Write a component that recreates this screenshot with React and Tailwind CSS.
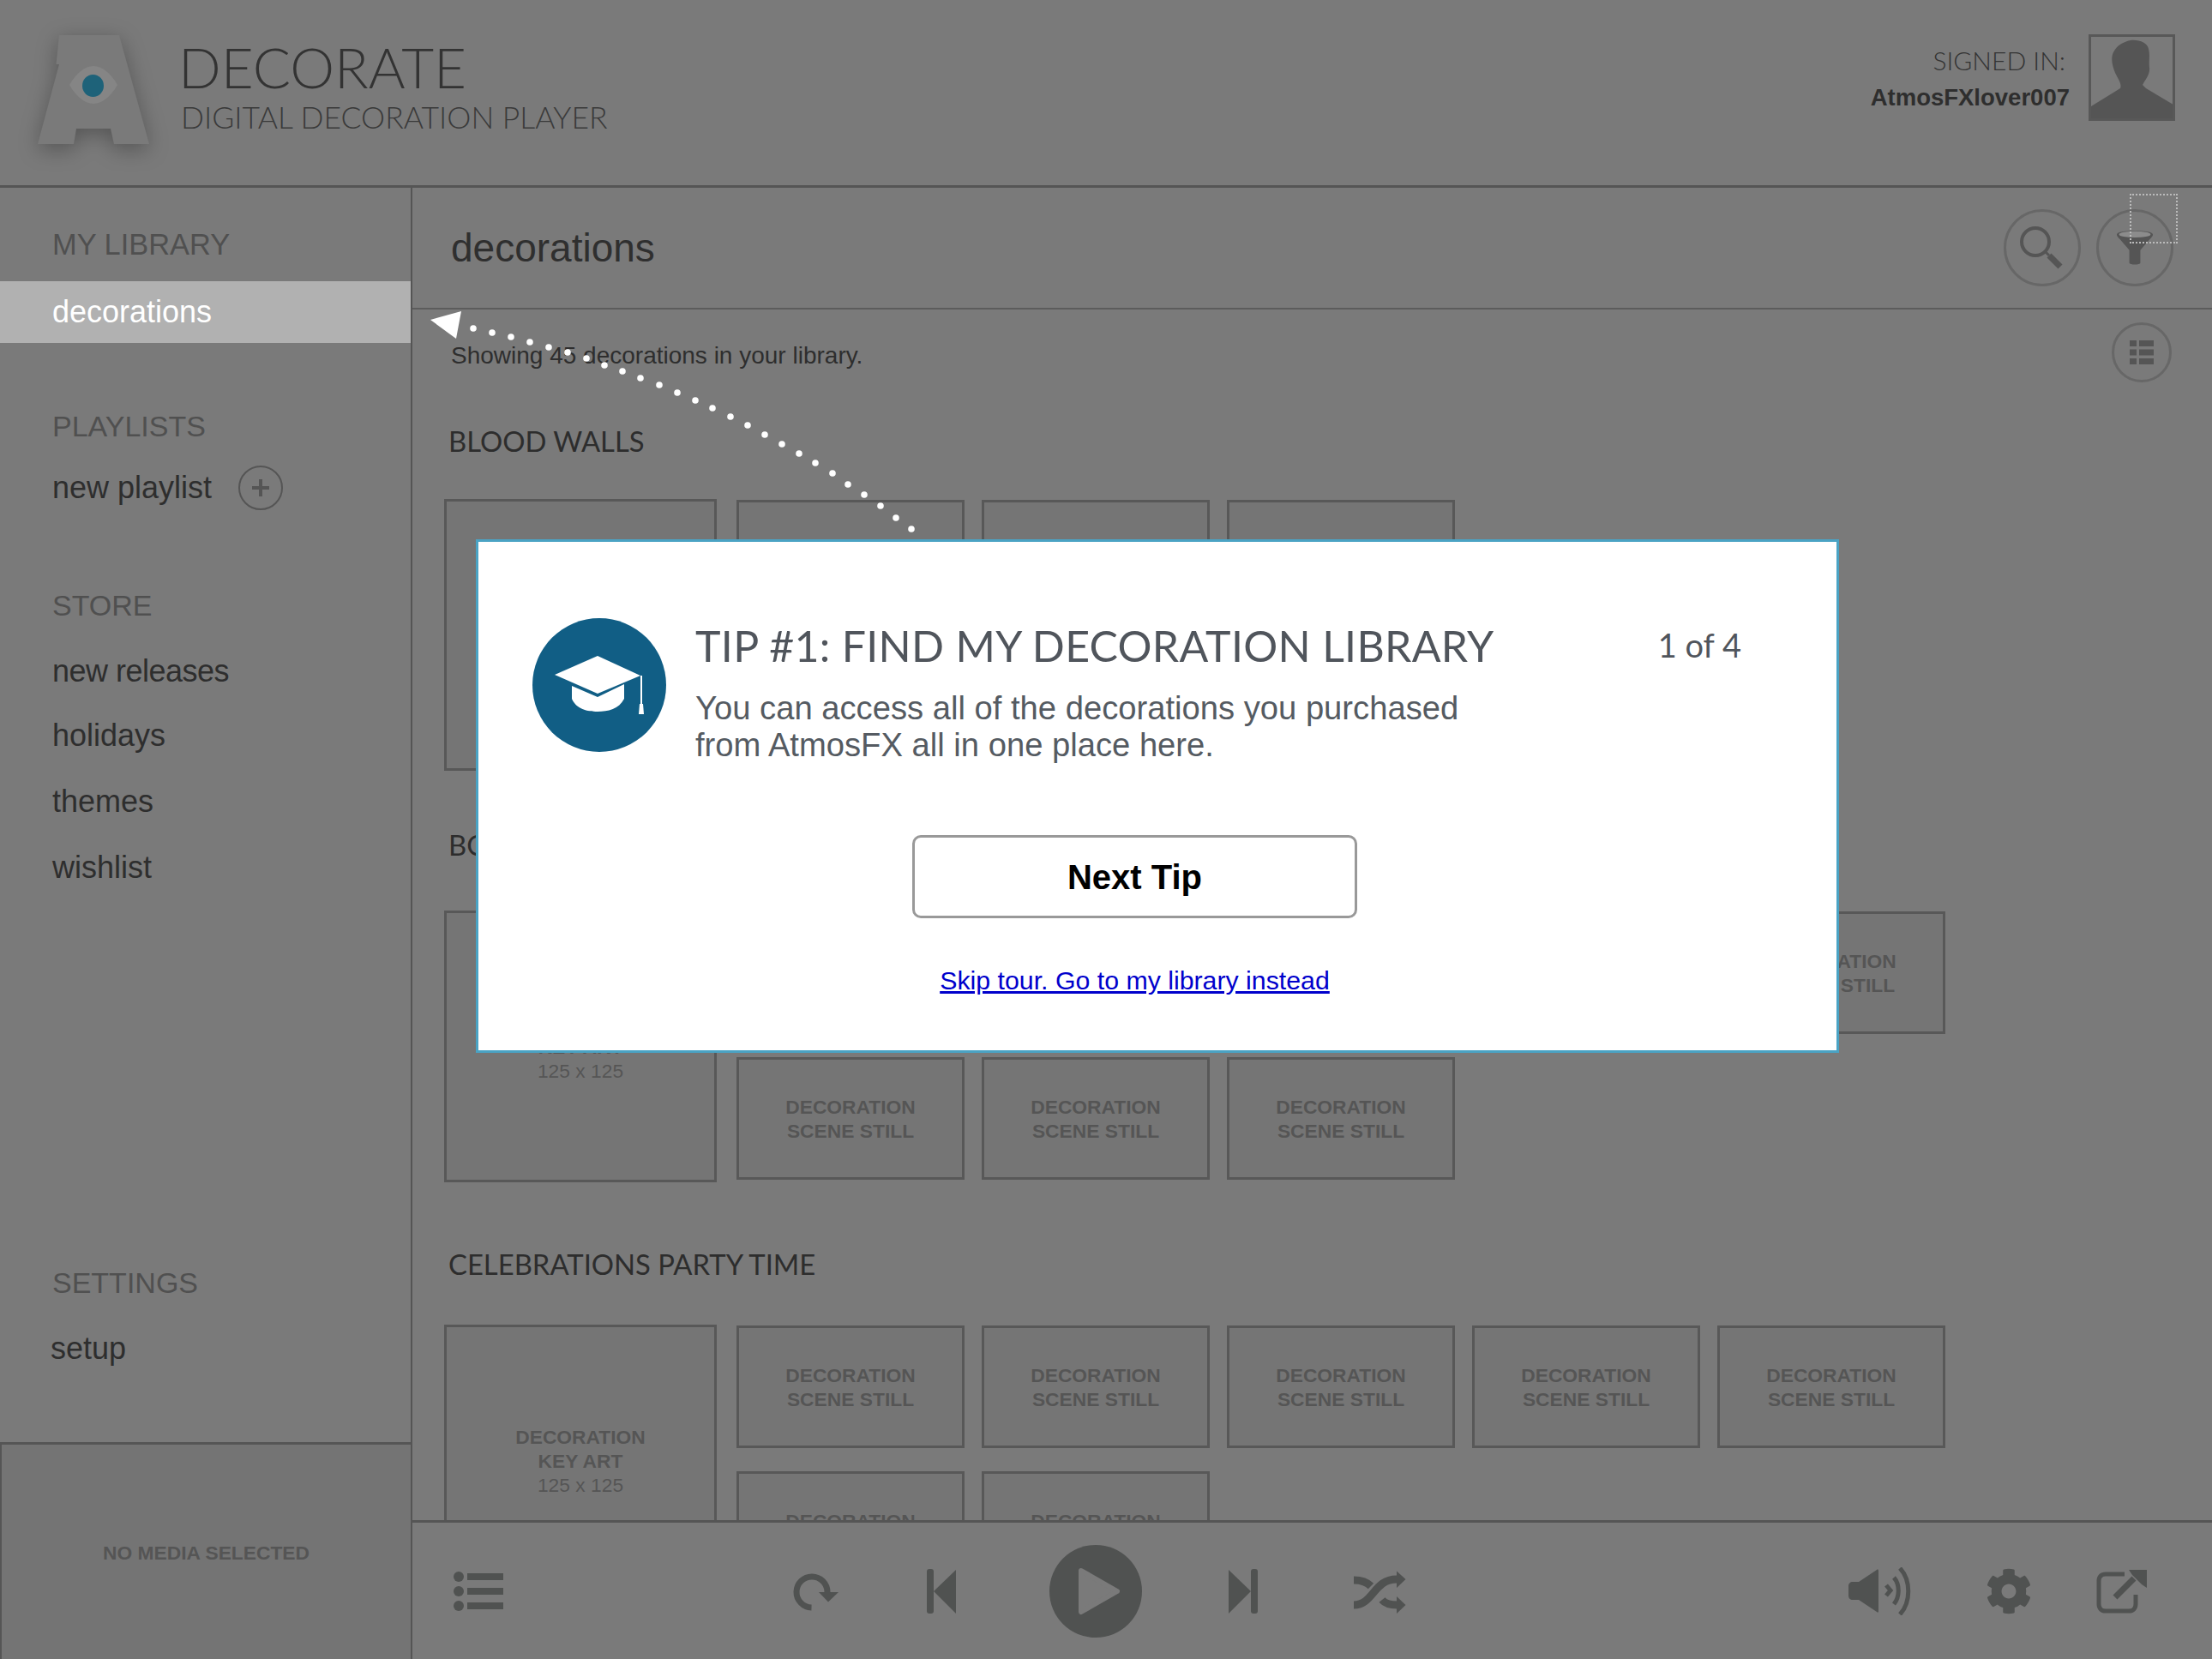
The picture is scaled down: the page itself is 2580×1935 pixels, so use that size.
import { FaCog } from 'react-icons/fa';

const dots = [
  [552, 383], [574, 388], [596, 393], [618, 399], [640, 405], [662, 411], [684, 418], [705, 426],
  [726, 433], [747, 441], [769, 449], [790, 458], [811, 467], [831, 476], [852, 486], [872, 496],
  [892, 507], [912, 518], [932, 529], [951, 540], [971, 552], [989, 565], [1008, 577], [1027, 590],
  [1045, 604], [1063, 617],
];

const sans = "font-['Liberation_Sans',Arial,sans-serif]";
const lato = "font-['Lato',sans-serif]";

function Tile() {
  return (
    <div className="w-[266px] h-[143px] border-[3px] border-[#585858] bg-[#757575] flex items-center justify-center text-center text-[22.8px] leading-[28px] font-bold text-[#555]">
      <p>DECORATION<br />SCENE STILL</p>
    </div>
  );
}

function Group({ title, tiles, className }) {
  return (
    <section className={className}>
      <h2 className={`${lato} h-[40px] leading-[40px] pl-[5px] text-[32.8px] text-[#2d2d2d]`}>{title.text}</h2>
      <div className={`flex items-start ${title.gap}`}>
        <div className="w-[318px] h-[317px] shrink-0 border-[3px] border-[#585858] bg-[#757575] flex items-center justify-center text-center text-[22.8px] leading-[28px] text-[#555]">
          <p><b>DECORATION<br />KEY ART</b><br />125 x 125</p>
        </div>
        <div className="ml-[23px] mt-[1px] flex flex-wrap gap-x-[20px] gap-y-[27px] w-[1420px]">
          {Array.from({ length: tiles }).map((_, i) => <Tile key={i} />)}
        </div>
      </div>
    </section>
  );
}

function Logo() {
  return (
    <svg width="200" height="190" viewBox="0 0 200 190" className="drop-shadow-[0_6px_12px_rgba(0,0,0,0.3)]">
      <path d="M69 41H139L174 168H133L129 150H89L86 168H44L69 75H60L65.500 75Z" fill="#7a7a7a" />
      <path d="M81 99C88 87 98 77 109 77C120 77 130 87 137 99C130 111 120 121 109 121C98 121 88 111 81 99Z" fill="#858585" />
      <ellipse cx="108.500" cy="100" rx="12.500" ry="13" fill="#1e6279" />
    </svg>
  );
}

function Avatar() {
  return (
    <div className="w-[101px] h-[101px] border-[3px] border-[#585858] overflow-hidden">
      <svg viewBox="0 0 95 95" width="95" height="95">
        <path d="M46 4C56 3 66 7 67 14C69 22 67 28 68 36C69 44 63 50 60 56L64 60L96 79V96H0V81L34 60C36 55 32 50 28 42C24 32 23 24 26 18C30 10 37 6 46 4Z" fill="#555" />
      </svg>
    </div>
  );
}

function CircleBtn({ size, children }) {
  return <div className={`${size} rounded-full border-[3px] border-[#676767] flex items-center justify-center`}>{children}</div>;
}

export default function App() {
  return (
    <div className={`${sans} relative w-[2580px] h-[1935px] overflow-hidden bg-[#7a7a7a] flex flex-col`}>
      {/* header */}
      <header className="h-[219px] shrink-0 border-b-[3px] border-[#555] flex items-start">
        <div className="w-[208px] shrink-0"><Logo /></div>
        <div className={`${lato} text-[#333]`}>
          <div className="mt-[42px] h-[72px] leading-[72px] text-[65.5px] font-light">DECORATE</div>
          <div className="mt-[1px] ml-[3px] h-[44px] leading-[44px] text-[35.5px] font-light text-[#3a3a3a]">DIGITAL DECORATION PLAYER</div>
        </div>
        <div className="ml-auto mr-[43px] mt-[40px] flex items-start">
          <div className="text-right mr-[22px]">
            <div className={`${lato} mt-[10px] mr-[5px] h-[40px] leading-[40px] text-[30px] font-light text-[#333]`}>SIGNED IN:</div>
            <div className="mt-[6px] text-[27.5px] leading-[36px] font-bold text-[#2e2e2e]">AtmosFXlover007</div>
          </div>
          <Avatar />
        </div>
      </header>

      <div className="flex flex-1 min-h-0">
        {/* sidebar */}
        <aside className="w-[481px] shrink-0 border-r-2 border-[#555] flex flex-col">
          <h3 className="mt-[46px] pl-[61px] h-[40px] leading-[40px] text-[34.4px] text-[#505050]">MY LIBRARY</h3>
          <div className="mt-[23px] h-[72px] bg-[#b1b1b1] pl-[61px] leading-[72px] text-[36px] text-white">decorations</div>
          <h3 className="mt-[77px] pl-[61px] h-[40px] leading-[40px] text-[34px] text-[#505050]">PLAYLISTS</h3>
          <div className="mt-[27px] pl-[61px] h-[50px] flex items-center text-[36px] text-[#2e2e2e]">
            new playlist
            <span className="ml-[31px] w-[52px] h-[52px] rounded-full border-2 border-[#555] flex items-center justify-center">
              <svg width="22" height="22" viewBox="0 0 22 22"><path d="M11 1V21M1 11H21" stroke="#555" strokeWidth="4" /></svg>
            </span>
          </div>
          <h3 className="mt-[92px] pl-[61px] h-[40px] leading-[40px] text-[34px] text-[#505050]">STORE</h3>
          <div className="mt-[32px] pl-[61px] h-[50px] leading-[50px] text-[36px] tracking-[-0.5px] text-[#2e2e2e]">new releases</div>
          <div className="mt-[25px] pl-[61px] h-[50px] leading-[50px] text-[36px] text-[#2e2e2e]">holidays</div>
          <div className="mt-[27px] pl-[61px] h-[50px] leading-[50px] text-[36px] text-[#2e2e2e]">themes</div>
          <div className="mt-[27px] pl-[61px] h-[50px] leading-[50px] text-[36px] text-[#2e2e2e]">wishlist</div>
          <h3 className="mt-[439px] pl-[61px] h-[40px] leading-[40px] text-[34px] text-[#505050]">SETTINGS</h3>
          <div className="mt-[32px] pl-[59px] h-[50px] leading-[50px] text-[36px] text-[#2e2e2e]">setup</div>
          <div className="mt-auto h-[253px] border-t-[3px] border-l-2 border-[#555] bg-[#747474] flex items-center justify-center text-[22.8px] font-bold text-[#555]">
            <span className="mt-[3px]">NO MEDIA SELECTED</span>
          </div>
        </aside>

        {/* main */}
        <main className="flex-1 min-w-0 flex flex-col">
          <div className="h-[142px] shrink-0 border-b-2 border-[#5c5c5c] pl-[45px] pr-[45px] flex items-center">
            <h1 className="text-[46px] text-[#2f2f2f]">decorations</h1>
            <div className="ml-auto flex gap-[18px]">
              <CircleBtn size="w-[90px] h-[90px]">
                <svg width="56" height="56" viewBox="0 0 56 56" className="-ml-[2px]">
                  <circle cx="21" cy="21" r="16" fill="none" stroke="#555" strokeWidth="4" />
                  <path d="M33 33L37 37" stroke="#555" strokeWidth="3" />
                  <path d="M37 37L50 50" stroke="#555" strokeWidth="7" />
                </svg>
              </CircleBtn>
              <CircleBtn size="w-[90px] h-[90px]">
                <svg width="44" height="44" viewBox="0 0 48 48">
                  <path d="M1 7C1 1 47 1 47 7C47 9 45 11 43 13L31 27V43C31 46 17 46 17 43V27L5 13C3 11 1 9 1 7Z" fill="#555" />
                  <ellipse cx="24" cy="7" rx="20" ry="4" fill="#8c8c8c" />
                </svg>
              </CircleBtn>
            </div>
          </div>

          <div className="flex-1 min-h-0 overflow-hidden pl-[37px]">
            <div className="h-[84px] flex items-start pr-[47px]">
              <p className="mt-[38px] ml-[8px] text-[28px] leading-[32px] text-[#2e2e2e]">Showing 45 decorations in your library.</p>
              <div className="ml-auto mt-[15px]">
                <CircleBtn size="w-[70px] h-[70px]">
                  <svg width="30" height="30" viewBox="0 0 30 30" fill="#555">
                    <path d="M1 1H9V8H1ZM12 1H29V8H12ZM1 11.500H9V18.500H1ZM12 11.500H29V18.500H12ZM1 22H9V29H1ZM12 22H29V29H12Z" />
                  </svg>
                </CircleBtn>
              </div>
            </div>
            <Group className="mt-[50px]" title={{ text: 'BLOOD WALLS', gap: 'mt-[47px]' }} tiles={3} />
            <Group className="mt-[67px]" title={{ text: 'BONE CHILLERS', gap: 'mt-[56px]' }} tiles={8} />
            <Group className="mt-[76px]" title={{ text: 'CELEBRATIONS PARTY TIME', gap: 'mt-[50px]' }} tiles={7} />
          </div>

          {/* player bar */}
          <div className="h-[162px] shrink-0 border-t-[3px] border-[#555] flex items-center text-[#505251]">
            <svg width="58" height="46" viewBox="0 0 58 46" fill="currentColor" className="ml-[48px]">
              <ellipse cx="6" cy="6" rx="6" ry="6" /><rect x="16" y="2" width="42" height="8" />
              <ellipse cx="6" cy="23" rx="6" ry="6" /><rect x="16" y="19" width="42" height="8" />
              <ellipse cx="6" cy="40" rx="6" ry="6" /><rect x="16" y="36" width="42" height="8" />
            </svg>
            <svg width="54" height="46" viewBox="25 24 54 46" className="ml-[338px] mt-[3px]">
              <path d="M46.500 65A18 18 0 1 1 65 47" fill="none" stroke="currentColor" strokeWidth="7" />
              <path d="M55 47H78L66 58.500Z" fill="currentColor" />
            </svg>
            <svg width="34" height="52" viewBox="0 0 34 52" fill="currentColor" className="ml-[102px]">
              <rect x="0" y="0" width="8" height="52" rx="3" /><path d="M34 1V52L8 26Z" />
            </svg>
            <div className="ml-[109px] w-[108px] h-[108px] rounded-full bg-current flex items-center justify-center">
              <svg width="50" height="56" viewBox="0 0 50 56" className="ml-[8px]">
                <path d="M4 4L46 28L4 52Z" fill="#7a7a7a" stroke="#7a7a7a" strokeWidth="6" strokeLinejoin="round" />
              </svg>
            </div>
            <svg width="34" height="52" viewBox="0 0 34 52" fill="currentColor" className="ml-[101px]">
              <path d="M0 1V52L26 26Z" /><rect x="26" y="0" width="8" height="52" rx="3" />
            </svg>
            <svg width="62" height="51" viewBox="38 22 62 51" className="ml-[111px] mt-[3px]">
              <path d="M39 62C62 62 62 32 89 32M39 33C48 33 54 35 59 40M72 56C76 61 82 62 90 62" fill="none" stroke="currentColor" strokeWidth="9" />
              <path d="M89 22.500L99.500 32L89 42ZM89 52L99.500 62L89 72Z" fill="currentColor" />
            </svg>
            <svg width="76" height="56" viewBox="0 0 76 56" fill="currentColor" className="ml-[516px]">
              <path d="M0 22C0 19 2 17 5 17H12L33 3C34 2 35 3 35 4V51C35 53 34 53 33 52L12 38H5C2 38 0 36 0 33Z" />
              <path d="M44 21L49 27L44 33" fill="none" stroke="currentColor" strokeWidth="5" />
              <path d="M53 12C60 20 60 34 53 43" fill="none" stroke="currentColor" strokeWidth="5" />
              <path d="M60 1C73 15 73 41 60 55" fill="none" stroke="currentColor" strokeWidth="5" />
            </svg>
            <FaCog size={54} className="ml-[84px]" />
            <svg width="60" height="52" viewBox="0 0 60 52" className="ml-[75px]">
              <path d="M33 6H11C6 6 3 9 3 14V41C3 46 6 49 11 49H38C43 49 46 46 46 41V30" fill="none" stroke="currentColor" strokeWidth="5" />
              <path d="M22 33L44 11" stroke="currentColor" strokeWidth="7" />
              <path d="M38 1H59V22L53 18L42 7Z" fill="currentColor" />
            </svg>
          </div>
        </main>
      </div>

      {/* tour arrow */}
      <svg className="absolute left-0 top-0 pointer-events-none" width="2580" height="1935">
        <path d="M502 373L538 363L532 395Z" fill="#fff" />
        {dots.map(([x, y]) => <circle key={x} cx={x} cy={y} r="3.800" fill="#fff" />)}
      </svg>
      <div className="absolute left-[2484px] top-[226px] w-[56px] h-[58px] border-2 border-dotted border-[#bbb]" />

      {/* tip dialog */}
      <div className="absolute left-[555px] top-[629px] w-[1590px] h-[599px] bg-white border-[3px] border-[#4aa3c4]">
        <div className="mt-[89px] ml-[63px] flex items-start">
          <div className="w-[156px] h-[156px] rounded-full bg-[#115e85] shrink-0 flex items-center justify-center">
            <svg width="104" height="68" viewBox="0 0 104 68" fill="#fff">
              <path d="M50 0L100 23L50 44L0 22Z" />
              <path d="M20 35L50 48L81 33V50C75 62 62 65 50 65C38 65 25 62 20 50Z" />
              <rect x="100" y="23" width="2" height="34" />
              <path d="M99 56H103L104 68H98Z" />
            </svg>
          </div>
          <div className="ml-[34px] w-[1220px]">
            <div className="flex justify-between items-center h-[64px]">
              <h2 className={`${lato} text-[50px] tracking-[0.3px] text-[#50555c]`}>TIP #1: FIND MY DECORATION LIBRARY</h2>
              <span className={`${lato} -mt-[2px] text-[38px] text-[#50555c]`}>1 of 4</span>
            </div>
            <p className="mt-[19px] text-[38.2px] leading-[43px] text-[#555b62]">
              You can access all of the decorations you purchased<br />from AtmosFX all in one place here.
            </p>
          </div>
        </div>
        <div className="mt-[84px] ml-[506px] w-[519px] flex flex-col items-center">
          <button className="w-full h-[97px] rounded-[10px] border-[3px] border-[#999] bg-white text-[40px] font-bold text-black">Next Tip</button>
          <a href="#" className="mt-[53px] text-[30.3px] leading-[40px] text-[#0000cc] underline">Skip tour. Go to my library instead</a>
        </div>
      </div>
    </div>
  );
}
